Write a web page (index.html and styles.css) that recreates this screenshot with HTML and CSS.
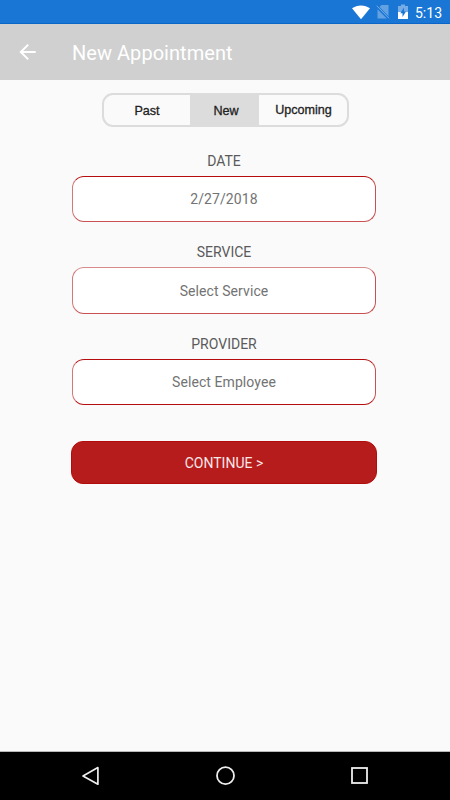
FILE: index.html
```html
<!DOCTYPE html>
<html lang="en">
<head>
  <meta charset="UTF-8">
  <title>New Appointment</title>
  <link rel="stylesheet" href="styles.css">
</head>
<body>

  <div class="status-bar">
    <svg class="wifi" width="20" height="16" viewBox="0 0 20 16">
      <path d="M1 4.3C6 .4 14 .4 19 4.3L10 15.3Z" fill="#fff"/>
    </svg>
    <svg class="no-sim" width="14" height="16" viewBox="0 0 14 16">
      <path d="M5.5 1H12.5V12.3L3.5 3Z M1.5 5.2L10.8 14.5H1.5Z" fill="#fff" opacity=".32"/>
      <path d="M.7 1.7L13 14.3" stroke="#fff" stroke-width="1" opacity=".4"/>
    </svg>
    <svg class="battery" width="10" height="16" viewBox="0 0 10 16">
      <path d="M3 .5H7V2H10V8H0V2H3Z" fill="#fff" opacity=".4"/>
      <path d="M0 8H10V15H0Z" fill="#fff"/>
      <path d="M6 3.5L2.3 9.2H4.5V13L8 7.4H6Z" fill="#1976d5"/>
    </svg>
    <span class="clock">5:13</span>
  </div>

  <header class="toolbar">
    <svg class="back" width="18" height="18" viewBox="0 0 18 18">
      <path d="M17.7 9H3M10.2 1.6L2.8 9L10.2 16.4" fill="none" stroke="#fff" stroke-width="2"/>
    </svg>
    <h1>New Appointment</h1>
  </header>

  <main class="content">
    <div class="tabs">
      <div class="tab past">Past</div>
      <div class="tab active">New</div>
      <div class="tab upcoming">Upcoming</div>
    </div>

    <div class="group">
      <div class="label">DATE</div>
      <div class="field date">2/27/2018</div>
    </div>
    <div class="group">
      <div class="label">SERVICE</div>
      <div class="field service">Select Service</div>
    </div>
    <div class="group">
      <div class="label">PROVIDER</div>
      <div class="field provider">Select Employee</div>
    </div>

    <div class="button">CONTINUE &gt;</div>
  </main>

  <nav class="nav-bar">
    <svg width="20" height="20" viewBox="0 0 20 20">
      <path d="M16.9 1.6V18.2L2 9.9Z" fill="none" stroke="#eee" stroke-width="1.7" stroke-linejoin="round"/>
    </svg>
    <svg width="20" height="20" viewBox="0 0 20 20">
      <circle cx="9.5" cy="9.7" r="8.5" fill="none" stroke="#eee" stroke-width="1.8"/>
    </svg>
    <svg width="20" height="20" viewBox="0 0 20 20">
      <rect x="2" y="2" width="15" height="15" fill="none" stroke="#eee" stroke-width="1.8"/>
    </svg>
  </nav>

</body>
</html>
```

FILE: styles.css
```css
* {
  margin: 0;
  padding: 0;
  box-sizing: border-box;
}

body {
  width: 450px;
  height: 800px;
  display: flex;
  flex-direction: column;
  font-family: Roboto, sans-serif;
  background-color: #fafafa;
  overflow: hidden;
}

.status-bar {
  height: 24px;
  display: flex;
  justify-content: flex-end;
  padding: 4px 8px 0 0;
  background-color: #1976d5;
  border-bottom: 1px solid #0b66c8;
  color: white;
}

.no-sim {
  margin-left: 5px;
}

.battery {
  margin-left: 8px;
}

.clock {
  margin-left: 7px;
  font-size: 14px;
  line-height: 18px;
}

.toolbar {
  height: 56px;
  display: flex;
  align-items: center;
  padding-left: 18px;
  background-color: #d0d0d0;
}

.toolbar h1 {
  margin-left: 36px;
  padding-top: 2px;
  font-size: 20px;
  font-weight: 400;
  letter-spacing: 0.04px;
  color: white;
}

.content {
  flex: 1;
  display: flex;
  flex-direction: column;
  align-items: center;
  padding: 13px 2px 0 0;
}

.tabs {
  width: 247px;
  height: 34px;
  margin-left: 3px;
  display: flex;
  border: 2px solid #dcdcdc;
  border-radius: 11px;
  overflow: hidden;
  font-family: "Liberation Sans", Arial, sans-serif;
  font-size: 12.6px;
  line-height: 32px;
  text-align: center;
  color: #222;
  -webkit-text-stroke: 0.3px #222;
}

.past {
  width: 86px;
}

.active {
  width: 69px;
  padding-left: 3px;
  background-color: #dcdcdc;
}

.upcoming {
  flex: 1;
  padding-left: 1px;
  line-height: 30px;
}

.group {
  margin-top: 25px;
  text-align: center;
}

.group + .group {
  margin-top: 21px;
}

.label {
  height: 24px;
  font-size: 14px;
  line-height: 18px;
  color: #5a5a5a;
}

.field {
  width: 304px;
  height: 46px;
  border: 1px solid #b50d0d;
  border-right-color: #c85050;
  border-left-color: #d27878;
  border-radius: 12px;
  background-color: white;
  font-size: 14px;
  line-height: 45px;
  letter-spacing: 0.08px;
  color: #737373;
}

.date {
  border-bottom-color: #c85050;
}

.service {
  height: 47px;
  border-top-color: #d68a8a;
  border-bottom-color: #c85050;
  line-height: 46px;
}

.button {
  width: 306px;
  height: 43px;
  margin-top: 36px;
  border: 1px solid #b30c0c;
  border-radius: 12px;
  background-color: #b71c1c;
  font-size: 14px;
  line-height: 43px;
  text-align: center;
  color: #f8e8e8;
}

.nav-bar {
  height: 49px;
  display: flex;
  justify-content: space-between;
  padding: 14px 80px 0 81px;
  border-top: 1px solid #b8b8b8;
  background-color: black;
}
```
